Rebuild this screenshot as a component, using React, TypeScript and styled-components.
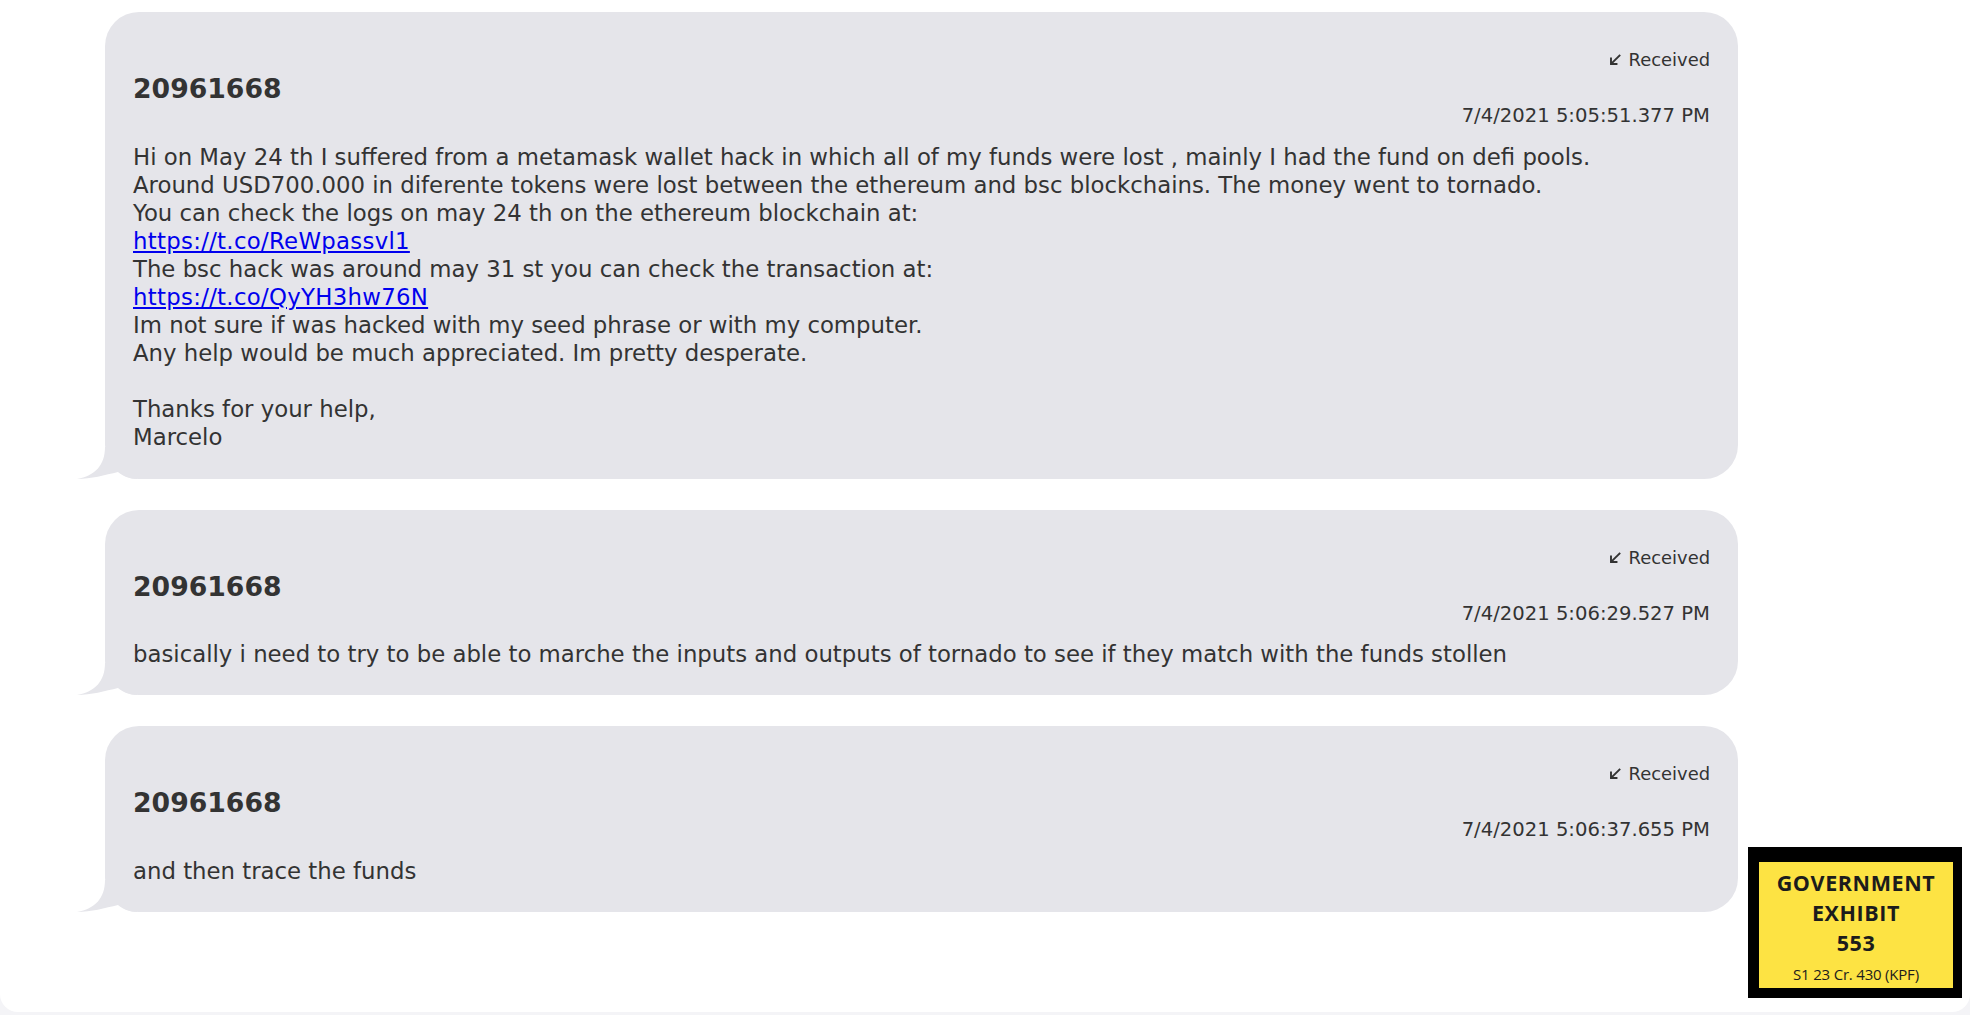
import React from "react";
import styled, { createGlobalStyle } from "styled-components";

const GlobalStyle = createGlobalStyle`
  html, body {
    margin: 0;
    padding: 0;
    background: #f4f4f7;
  }
  * { box-sizing: border-box; }
`;

const Page = styled.div`
  position: relative;
  min-height: 1012px;
  background: #ffffff;
  border-bottom-left-radius: 18px;
  border-bottom-right-radius: 18px;
  padding: 12px 0 0 105px;
  font-family: "DejaVu Sans", Verdana, sans-serif;
  color: #333333;
`;

const Thread = styled.div`
  width: 1633px;
  display: flex;
  flex-direction: column;
  gap: 31px;
`;

const Bubble = styled.div`
  position: relative;
  background: #e5e5ea;
  border-radius: 34px;
  padding: 37px 28px 27px 28px;
  display: flex;
  flex-direction: column;
`;

const Tail = styled.svg`
  position: absolute;
  left: -30px;
  bottom: 0;
  width: 64px;
  height: 36px;
  display: block;
`;

const Status = styled.div`
  align-self: flex-end;
  display: flex;
  align-items: center;
  gap: 8px;
  font-size: 17.9px;
  line-height: 22px;
  height: 22px;
`;

const Sender = styled.div`
  margin-top: 3px;
  font-size: 26.7px;
  line-height: 30px;
  font-weight: 700;
  color: #333333;
`;

const Stamp = styled.div`
  align-self: flex-end;
  font-size: 19.6px;
  line-height: 24px;
`;

const Body = styled.div`
  margin-top: 14.5px;
  font-size: 22.8px;
  line-height: 28.1px;
  white-space: nowrap;
`;

const Link = styled.a`
  color: #0000ee;
  text-decoration: underline;
  letter-spacing: 0.3px;
`;

const Exhibit = styled.div`
  position: absolute;
  left: 1748px;
  top: 847px;
  width: 214px;
  height: 151px;
  background: #fde343;
  border-style: solid;
  border-color: #000000;
  border-width: 15px 9px 10px 11px;
  display: flex;
  flex-direction: column;
  align-items: center;
  padding-top: 6px;
  font-family: "Open Sans", "Noto Sans", sans-serif;
  color: #1c1c1c;
`;

const ExhibitLine = styled.div<{ $small?: boolean }>`
  font-weight: ${(p) => (p.$small ? 500 : 700)};
  font-size: ${(p) => (p.$small ? "15px" : "21.5px")};
  line-height: ${(p) => (p.$small ? "32px" : "30px")};
  letter-spacing: ${(p) => (p.$small ? "-0.2px" : "0.6px")};
  white-space: nowrap;
`;

const ReceivedArrow = () => (
  <svg width="12" height="12" viewBox="0 0 12 12" fill="none" stroke="#333" strokeWidth="1.9" strokeLinecap="square">
    <path d="M10.5 1.5 L2.5 9.5" />
    <path d="M2 4.5 V10 H7.5" />
  </svg>
);

const BubbleTail = () => (
  <Tail viewBox="0 0 64 36">
    <path
      d="M30 4 C30 22, 20 33, 2 36 C16 36, 30 32, 43 29 C48 33, 54 36, 62 36 L62 4 Z"
      fill="#e5e5ea"
    />
  </Tail>
);

type Message = {
  id: string;
  time: string;
  body: React.ReactNode;
};

const messages: Message[] = [
  {
    id: "20961668",
    time: "7/4/2021 5:05:51.377 PM",
    body: (
      <>
        Hi on May 24 th I suffered from a metamask wallet hack in which all of my funds were lost , mainly I had the fund on defi pools.
        <br />
        Around USD700.000 in diferente tokens were lost between the ethereum and bsc blockchains. The money went to tornado.
        <br />
        You can check the logs on may 24 th on the ethereum blockchain at:
        <br />
        <Link href="https://t.co/ReWpassvl1">https://t.co/ReWpassvl1</Link>
        <br />
        The bsc hack was around may 31 st you can check the transaction at:
        <br />
        <Link href="https://t.co/QyYH3hw76N">https://t.co/QyYH3hw76N</Link>
        <br />
        Im not sure if was hacked with my seed phrase or with my computer.
        <br />
        Any help would be much appreciated. Im pretty desperate.
        <br />
        <br />
        Thanks for your help,
        <br />
        Marcelo
      </>
    ),
  },
  {
    id: "20961668",
    time: "7/4/2021 5:06:29.527 PM",
    body: (
      <>
        basically i need to try to be able to marche the inputs and outputs of tornado to see if they match with the funds stollen
      </>
    ),
  },
  {
    id: "20961668",
    time: "7/4/2021 5:06:37.655 PM",
    body: <>and then trace the funds</>,
  },
];

export default function App() {
  return (
    <>
      <GlobalStyle />
      <Page>
        <Thread>
          {messages.map((m, i) => (
            <Bubble key={i}>
              <BubbleTail />
              <Status>
                <ReceivedArrow />
                <span>Received</span>
              </Status>
              <Sender>{m.id}</Sender>
              <Stamp>{m.time}</Stamp>
              <Body>{m.body}</Body>
            </Bubble>
          ))}
        </Thread>
        <Exhibit>
          <ExhibitLine>GOVERNMENT</ExhibitLine>
          <ExhibitLine>EXHIBIT</ExhibitLine>
          <ExhibitLine>553</ExhibitLine>
          <ExhibitLine $small>S1 23 Cr. 430 (KPF)</ExhibitLine>
        </Exhibit>
      </Page>
    </>
  );
}
